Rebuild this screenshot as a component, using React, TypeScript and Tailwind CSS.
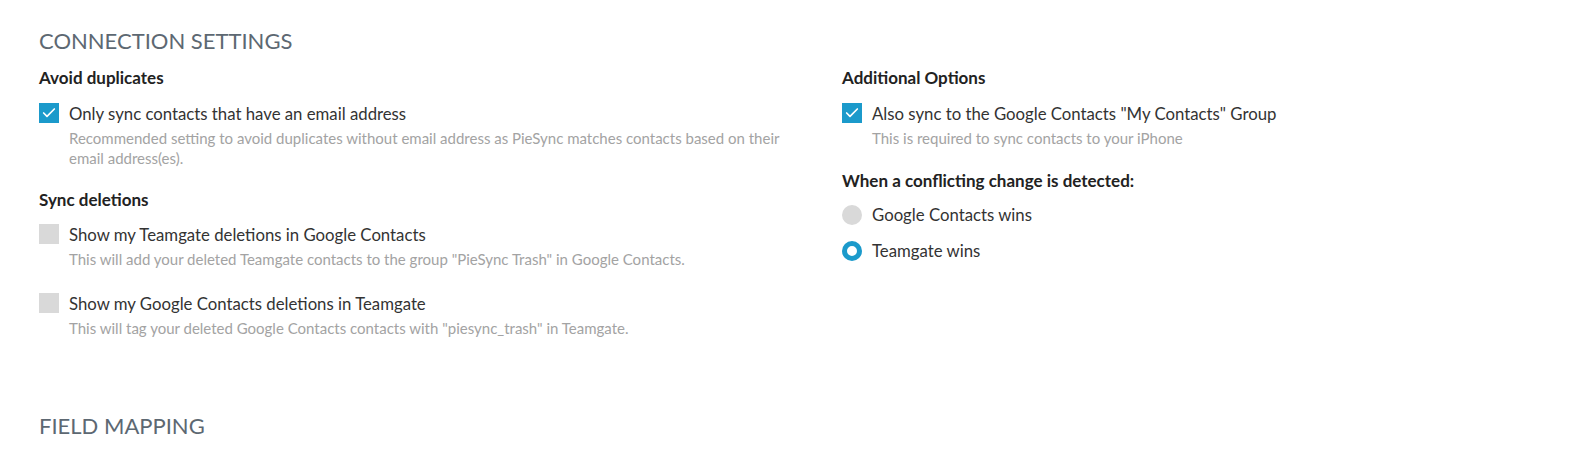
import { Check } from 'lucide-react';

function Checkbox({ checked }: { checked?: boolean }) {
  return (
    <span
      className={
        'flex h-5 w-5 shrink-0 items-center justify-center ' +
        (checked ? 'bg-[#1b9acb]' : 'bg-[#d9d9d9]')
      }
    >
      {checked && <Check className="h-4 w-4 text-white" strokeWidth={2.5} />}
    </span>
  );
}

function Radio({ checked }: { checked?: boolean }) {
  return checked ? (
    <span className="block h-5 w-5 shrink-0 rounded-full border-[5px] border-[#1b9acb] bg-white" />
  ) : (
    <span className="block h-5 w-5 shrink-0 rounded-full bg-[#d9d9d9]" />
  );
}

function Option({ checked, label, desc }: { checked?: boolean; label: string; desc?: string }) {
  return (
    <div className="flex gap-[10px]">
      <Checkbox checked={checked} />
      <div className="pt-[1px]">
        <div className="text-[16.75px] leading-[20px] text-[#333]">{label}</div>
        {desc && <div className="mt-[4px] text-[15px] leading-[20px] text-[#a3a3a3]">{desc}</div>}
      </div>
    </div>
  );
}

function Title({ children }: { children: string }) {
  return <div className="text-[17px] font-bold leading-[20px] text-[#222]">{children}</div>;
}

export default function App() {
  return (
    <div className="min-h-screen bg-white px-[39px] pt-[29px] font-['Lato','Open_Sans',sans-serif]">
      <h2 className="text-[22px] leading-[24px] text-[#5d6872]">CONNECTION SETTINGS</h2>

      <div className="mt-[15px] flex">
        <div className="w-[763px] shrink-0">
          <Title>Avoid duplicates</Title>
          <div className="mt-[15px]">
            <Option
              checked
              label="Only sync contacts that have an email address"
              desc="Recommended setting to avoid duplicates without email address as PieSync matches contacts based on their email address(es)."
            />
          </div>

          <div className="mt-[22px]">
            <Title>Sync deletions</Title>
          </div>
          <div className="mt-[14px]">
            <Option
              label="Show my Teamgate deletions in Google Contacts"
              desc={'This will add your deleted Teamgate contacts to the group "PieSync Trash" in Google Contacts.'}
            />
          </div>
          <div className="mt-[24px]">
            <Option
              label="Show my Google Contacts deletions in Teamgate"
              desc={'This will tag your deleted Google Contacts contacts with "piesync_trash" in Teamgate.'}
            />
          </div>
        </div>

        <div className="ml-[40px] flex-1">
          <Title>Additional Options</Title>
          <div className="mt-[15px]">
            <Option
              checked
              label={'Also sync to the Google Contacts "My Contacts" Group'}
              desc="This is required to sync contacts to your iPhone"
            />
          </div>
          <div className="mt-[23px]">
            <Title>When a conflicting change is detected:</Title>
          </div>
          <div className="mt-[14px] flex flex-col gap-[16px]">
            <div className="flex items-center gap-[10px]">
              <Radio />
              <span className="text-[16.75px] leading-[20px] text-[#333]">Google Contacts wins</span>
            </div>
            <div className="flex items-center gap-[10px]">
              <Radio checked />
              <span className="text-[16.75px] leading-[20px] text-[#333]">Teamgate wins</span>
            </div>
          </div>
        </div>
      </div>

      <h2 className="mt-[76px] text-[22px] leading-[24px] text-[#5d6872]">FIELD MAPPING</h2>
    </div>
  );
}
